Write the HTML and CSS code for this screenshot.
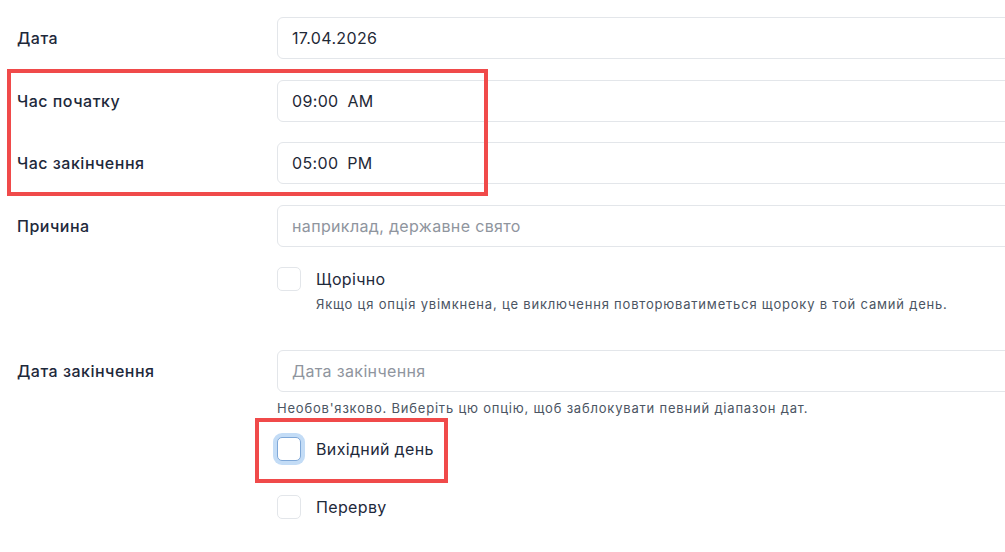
FILE: index.html
```html
<!DOCTYPE html>
<html lang="uk">
<head>
<meta charset="utf-8">
<title>Виключення</title>
<link rel="stylesheet" href="styles.css">
</head>
<body>
<form class="form">
  <div class="row">
    <label class="label">Дата</label>
    <div class="field"><input class="input" type="text" value="17.04.2026"></div>
  </div>
  <div class="row">
    <label class="label">Час початку</label>
    <div class="field"><input class="input time" type="text" value="09:00 AM"></div>
  </div>
  <div class="row">
    <label class="label">Час закінчення</label>
    <div class="field"><input class="input time" type="text" value="05:00 PM"></div>
  </div>
  <div class="row">
    <label class="label">Причина</label>
    <div class="field"><input class="input" type="text" placeholder="наприклад, державне свято"></div>
  </div>
  <div class="row check-row">
    <span></span>
    <div class="field">
      <div class="check"><span class="box"></span><span class="check-label">Щорічно</span></div>
      <p class="help indent">Якщо ця опція увімкнена, це виключення повторюватиметься щороку в той самий день.</p>
    </div>
  </div>
  <div class="row end-row">
    <label class="label">Дата закінчення</label>
    <div class="field"><input class="input" type="text" placeholder="Дата закінчення"></div>
  </div>
  <div class="row help-row">
    <span></span>
    <div class="field">
      <p class="help">Необов'язково. Виберіть цю опцію, щоб заблокувати певний діапазон дат.</p>
      <div class="check focus-check"><span class="box focused"></span><span class="check-label">Вихідний день</span></div>
      <div class="check break-check"><span class="box"></span><span class="check-label">Перерву</span></div>
    </div>
  </div>
</form>
<div class="mark mark-time"></div>
<div class="mark mark-dayoff"></div>
</body>
</html>
```
FILE: styles.css
```css
html, body {
  margin: 0;
  padding: 0;
  background: #ffffff;
  overflow: hidden;
}
body {
  width: 1005px;
  height: 552px;
  position: relative;
  font-family: "Inter", "Noto Sans", sans-serif;
  color: #1e293b;
}
.form {
  padding: 17px 0 0 17px;
  display: flex;
  flex-direction: column;
  gap: 20.5px;
}
.row {
  display: grid;
  grid-template-columns: 260px 760px;
  align-items: center;
}
.label {
  font-size: 16px;
  font-weight: 500;
  letter-spacing: 0.5px;
  color: #1e293b;
}
.input {
  box-sizing: border-box;
  display: block;
  width: 100%;
  height: 42px;
  border: 1px solid #e3e6ea;
  border-radius: 6px;
  padding: 0 14px;
  font-family: inherit;
  font-size: 16px;
  letter-spacing: 0.35px;
  color: #1f2937;
  background: #fff;
  outline: none;
}
.input::placeholder {
  color: #8f959e;
}
.time {
  word-spacing: 4px;
}
.check {
  display: flex;
  align-items: center;
  gap: 15px;
  height: 24px;
}
.box {
  box-sizing: border-box;
  width: 24px;
  height: 24px;
  flex: none;
  border: 1px solid #e3e6ea;
  border-radius: 5px;
  background: #fff;
}
.box.focused {
  border: 1.5px solid #7fa8d8;
  box-shadow: 0 0 0 4px #c3dcf6;
}
.check-label {
  font-size: 16px;
  letter-spacing: 0.35px;
  color: #1e293b;
}
.help {
  margin: 0;
  font-size: 13px;
  line-height: 16px;
  color: #4b5563;
  letter-spacing: 0.8px;
}
.help.indent {
  margin: 5px 0 0 39px;
}
.end-row {
  margin-top: 17.5px;
}
.help-row {
  margin-top: -12.5px;
}
.focus-check {
  margin-top: 21px;
}
.break-check {
  margin-top: 34px;
}
.mark {
  position: absolute;
  border: 4px solid #f04a4a;
  box-sizing: border-box;
}
.mark-time {
  left: 7px;
  top: 69px;
  width: 481px;
  height: 127px;
}
.mark-dayoff {
  left: 255px;
  top: 418px;
  width: 193px;
  height: 65px;
}
```
